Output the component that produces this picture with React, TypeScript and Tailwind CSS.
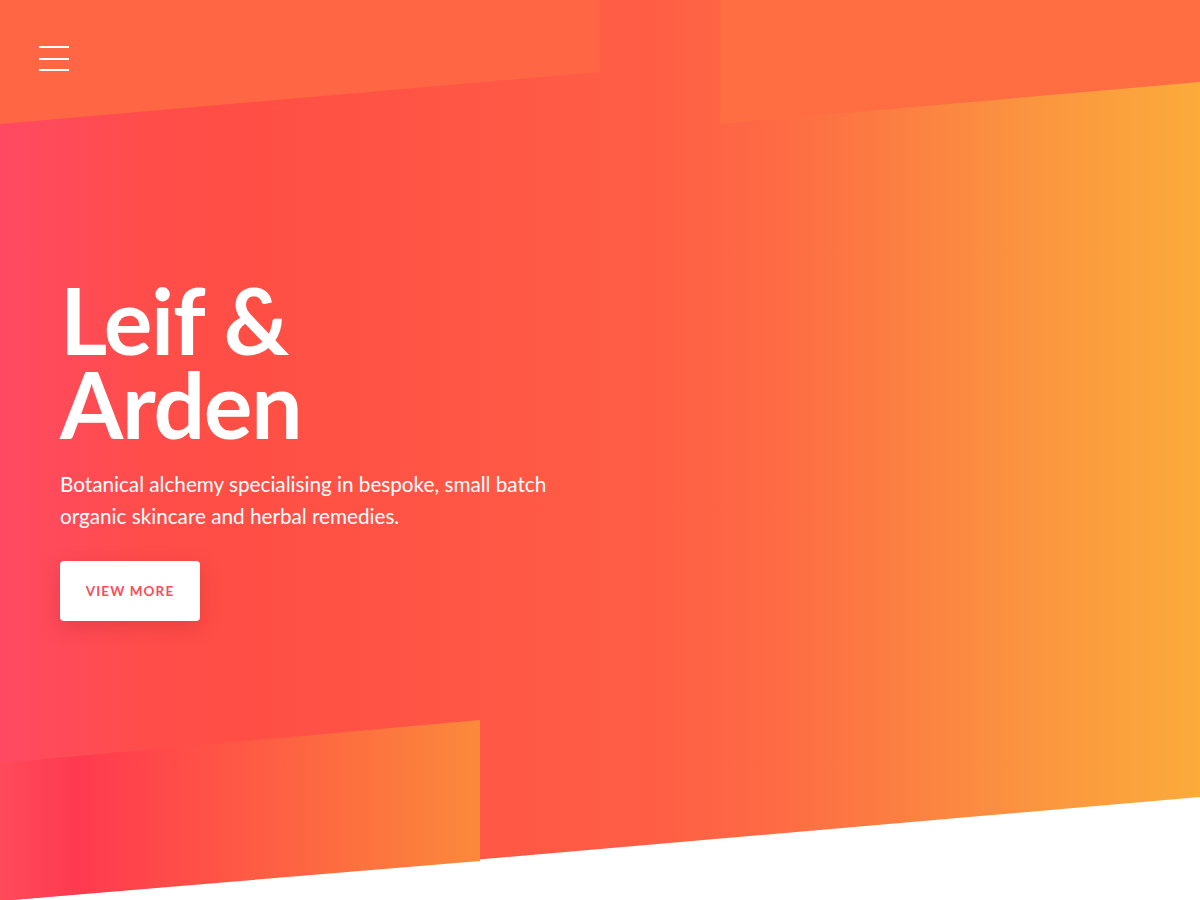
import React from "react";

export default function App() {
  return (
    <div className="relative w-full h-[900px] overflow-hidden bg-white" style={{ fontFamily: "Lato, 'Noto Sans', sans-serif" }}>
      {/* main gradient hero */}
      <div className="absolute inset-0 [clip-path:polygon(0_0,100%_0,100%_797px,0_901px)] bg-[linear-gradient(90deg,#ff4963_0%,#ff4d4b_12%,#ff4e45_19%,#ff5745_40%,#ff5f45_55%,#fe6b44_65%,#fc7f42_75%,#fb9540_86%,#fbab3a_100%)]" />
      {/* top-left shape */}
      <div className="absolute left-0 top-0 w-[600px] h-[124px] [clip-path:polygon(0_0,100%_0,100%_72px,0_124px)] bg-[#ff6644]" />
      {/* top-right shape */}
      <div className="absolute left-[720px] top-0 w-[480px] h-[124px] [clip-path:polygon(0_0,100%_0,100%_82px,0_124px)] bg-[linear-gradient(90deg,#ff6e42,#ff6d43)]" />
      {/* bottom-left shape */}
      <div className="absolute left-0 top-[720px] w-[480px] h-[181px] [clip-path:polygon(0_43px,100%_0,100%_141px,0_181px)] bg-[linear-gradient(90deg,#ff4a5a_0%,#ff3a50_16%,#ff4f47_40%,#fd6c40_70%,#fb8a3b_100%)]" />

      <div className="relative flex flex-col">
        <header className="pl-[39px] pt-[46px]">
          <div className="flex flex-col gap-[9.5px] w-[30px]">
            <span className="block h-[2px] bg-white" />
            <span className="block h-[2px] bg-white" />
            <span className="block h-[2px] bg-white" />
          </div>
        </header>
        <main className="pl-[60px] pt-[207px] flex flex-col items-start">
          <h1 className="text-white font-bold text-[91px] leading-[84px] tracking-[-1.2px]">
            Leif &amp;
            <br />
            Arden
          </h1>
          <p className="mt-[22px] text-white text-[20.7px] leading-[32px] w-[520px]">
            Botanical alchemy specialising in bespoke, small batch organic skincare and herbal remedies.
          </p>
          <button className="mt-[29px] w-[140px] h-[60px] bg-white rounded-[4px] shadow-[0_6px_20px_rgba(180,30,40,0.3)] text-[#ff4a5a] text-[13.5px] font-bold tracking-[1.1px]">
            VIEW MORE
          </button>
        </main>
      </div>
    </div>
  );
}
